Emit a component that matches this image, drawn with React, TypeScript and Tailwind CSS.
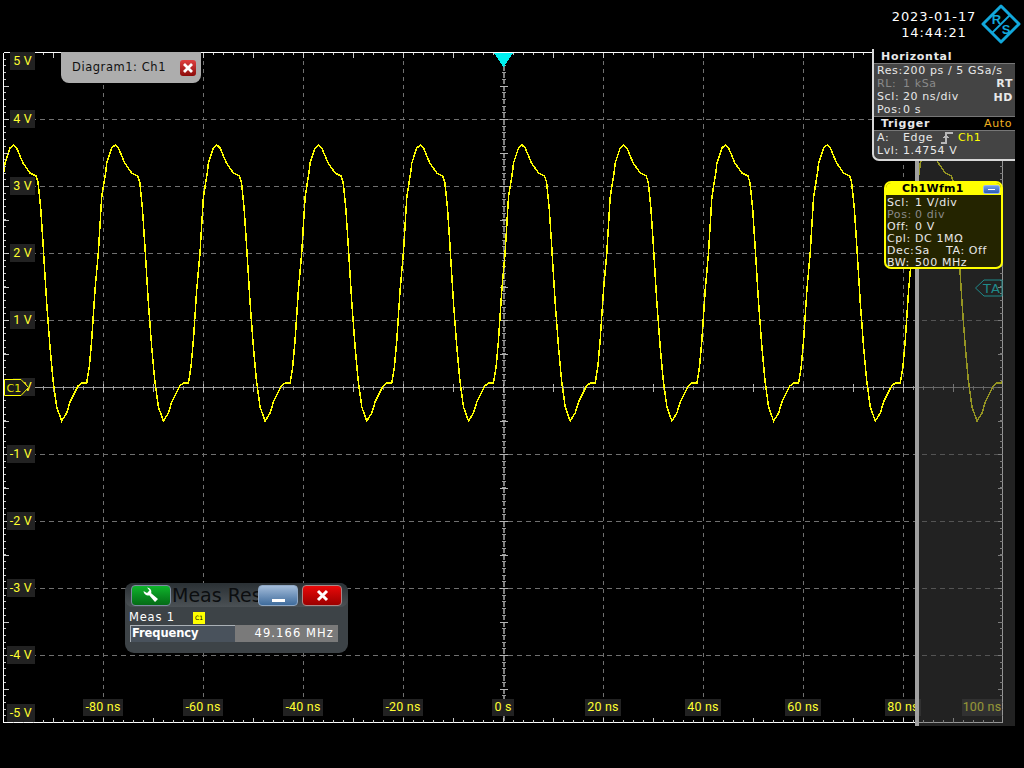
const PERIOD = 101.7;
const SHAPE: [number, number][] = [
  [-9.5, 172], [-8.5, 163], [-3.5, 148], [0, 145], [3.2, 148], [9.5, 163], [16.5, 173], [22.5, 176], [24.5, 182], [27.2, 208],
  [29.5, 243], [33.2, 303], [36.5, 347], [39.5, 380], [43.2, 407], [48.2, 421], [53.2, 413], [56.5, 402], [64.5, 386],
  [68.2, 383], [73.2, 383], [75.8, 367], [78.2, 340], [81.5, 290], [84.8, 253], [88.2, 197], [92.5, 170],
];

function wavePoints(): string {
  const pts: string[] = [];
  for (let k = 0; k < 10; k++) {
    const peak = 13.5 + k * PERIOD;
    for (const [dx, y] of SHAPE) {
      pts.push(`${(peak + dx).toFixed(1)},${y}`);
    }
  }
  return pts.join(" ");
}

const range = (a: number, b: number, s: number) => {
  const r: number[] = [];
  for (let v = a; v <= b + 0.01; v += s) r.push(v);
  return r;
};

const T = 52.5, B = 722.5, L = 3.5, R = 1002.5, CY = 387.5, CX = 503.5;
const vLabels = ["5 V", "4 V", "3 V", "2 V", "1 V", "V", "-1 V", "-2 V", "-3 V", "-4 V", "-5 V"];
const hLabels = ["-80 ns", "-60 ns", "-40 ns", "-20 ns", "0 s", "20 ns", "40 ns", "60 ns", "80 ns"];
const font = "[font-family:'DejaVu_Sans',sans-serif]";
const axisText = "bg-[#222222] text-[12.5px] tracking-[0.2px] text-[#ffff30] [font-family:Roboto,sans-serif]";

function Scope() {
  const xs = range(103.5, 903.5, 100);
  const ys = range(119.5, 655.5, 67);
  const px = (v: number) => Math.round(v - 0.5) + 0.5;
  return (
    <svg width="1024" height="716" viewBox="0 52 1024 716" className="block" shapeRendering="crispEdges">
      <defs>
        <clipPath id="plot"><rect x="4" y="52" width="998" height="671" /></clipPath>
      </defs>
      {xs.map((x) =>
        x !== CX ? <line key={x} x1={x} x2={x} y1={T} y2={B} stroke="#707070" strokeDasharray="4 4" /> : null
      )}
      {ys.map((y) =>
        y !== CY ? <line key={y} x1={L} x2={R} y1={y} y2={y} stroke="#707070" strokeDasharray="5 4" /> : null
      )}
      <line x1={L} x2={R} y1={CY} y2={CY} stroke="#9a9a9a" />
      <line x1={CX} x2={CX} y1={T} y2={B} stroke="#7e7e7e" strokeWidth="2" strokeDasharray="5 1.7" />
      {range(13.5, 993.5, 10).map((x) => (
        <line key={x} x1={x} x2={x} y1={CY - 2} y2={CY + 2} stroke="#9a9a9a" />
      ))}
      {range(53.5, 953.5, 50).map((x) => (
        <line key={x} x1={x} x2={x} y1={CY - 4} y2={CY + 4} stroke="#b4b4b4" />
      ))}
      {range(T + 6.7, B - 6.7, 6.7).map((y) => (
        <line key={y} x1={CX - 2} x2={CX + 2} y1={px(y)} y2={px(y)} stroke="#9a9a9a" />
      ))}
      {range(T + 33.5, B - 33.5, 33.5).map((y) => (
        <line key={y} x1={CX - 4} x2={CX + 4} y1={px(y)} y2={px(y)} stroke="#b4b4b4" />
      ))}
      <g clipPath="url(#plot)">
        <polyline points={wavePoints()} fill="none" stroke="#ffff00" strokeWidth="1.5" />
      </g>
      <line x1={L} x2={R} y1={T} y2={T} stroke="#ffffff" strokeWidth="1.5" />
      <line x1={L} x2={R} y1={B} y2={B} stroke="#ffffff" strokeWidth="1.5" />
      <line x1={L} x2={L} y1={T} y2={B} stroke="#ffffff" strokeWidth="1.5" />
      <line x1={R} x2={R} y1={T} y2={B} stroke="#ffffff" strokeWidth="1.5" />
      {range(13.5, 993.5, 10).map((x) => (
        <g key={x} stroke="#c8c8c8">
          <line x1={x} x2={x} y1={T} y2={T + 2.5} />
          <line x1={x} x2={x} y1={B - 2.5} y2={B} />
        </g>
      ))}
      {range(53.5, 953.5, 50).map((x) => (
        <g key={x} stroke="#c8c8c8">
          <line x1={x} x2={x} y1={T} y2={T + 5} />
          <line x1={x} x2={x} y1={B - 5} y2={B} />
        </g>
      ))}
      {range(T + 6.7, B - 6.7, 6.7).map((y) => (
        <g key={y} stroke="#c8c8c8">
          <line x1={L} x2={L + 2.5} y1={px(y)} y2={px(y)} />
          <line x1={R - 2.5} x2={R} y1={px(y)} y2={px(y)} />
        </g>
      ))}
      {range(T + 33.5, B - 33.5, 33.5).map((y) => (
        <g key={y} stroke="#c8c8c8">
          <line x1={L} x2={L + 5} y1={px(y)} y2={px(y)} />
          <line x1={R - 5} x2={R} y1={px(y)} y2={px(y)} />
        </g>
      ))}
      <polygon points="494,53 513,53 503.5,67" fill="#00f0f0" />
    </svg>
  );
}

function Logo() {
  return (
    <svg width="40" height="40" viewBox="0 0 40 40" className="block shrink-0">
      <polygon points="20,2 38,20 20,38 2,20" fill="none" stroke="#12a8dc" strokeWidth="3" strokeLinejoin="round" />
      <line x1="11" y1="29" x2="29" y2="11" stroke="#12a8dc" strokeWidth="1.8" />
      <text x="15.5" y="20" fontSize="13" fontWeight="bold" fill="#12a8dc" textAnchor="middle" fontFamily="'Liberation Sans',sans-serif">R</text>
      <text x="25" y="30" fontSize="13" fontWeight="bold" fill="#12a8dc" textAnchor="middle" fontFamily="'Liberation Sans',sans-serif">S</text>
    </svg>
  );
}

function Row({ k, v, dim, w = "w-[26px]", h = "h-[13px]" }: { k: string; v?: string; dim?: boolean; w?: string; h?: string }) {
  return (
    <div className={`flex ${h} items-center whitespace-nowrap ${dim ? "text-[#8a8a8a]" : "text-[#e8e8e8]"}`}>
      <span className={w}>{k}</span>
      <span>{v}</span>
    </div>
  );
}

function Horizontal() {
  return (
    <div className="absolute left-[872px] top-[49px] h-[112px] w-[143px] overflow-hidden rounded-bl-[7px] border-b-2 border-l-2 border-[#d8d8d8] bg-[#444444] text-[11px] leading-[13px] tracking-[0.6px]">
      <div className="flex h-[14px] items-end bg-black pl-[7px] font-bold tracking-[0.7px] text-[#e8e8e8]">Horizontal</div>
      <div className="flex h-[53px] justify-between border-t border-[#777] pl-[3px] pr-[2px]">
        <div>
          <Row k="Res:" v="200 ps / 5 GSa/s" />
          <Row k="RL:" v="1 kSa" dim />
          <Row k="Scl:" v="20 ns/div" />
          <Row k="Pos:" v="0 s" />
        </div>
      </div>
      <div className="absolute right-[2px] top-[28px] text-right font-bold leading-[14px] text-[#e8e8e8]">RT<br />HD</div>
      <div className="flex h-[14px] items-end justify-between border-t border-[#777] bg-black pl-[7px] pr-[3px]">
        <span className="font-bold tracking-[0.7px] text-[#e8e8e8]">Trigger</span>
        <span className="text-[#f0b020]">Auto</span>
      </div>
      <div className="border-t border-[#777] pl-[3px]">
        <div className="flex h-[13px] items-center whitespace-nowrap text-[#e8e8e8]">
          <span className="w-[26px]">A:</span>
          <span className="w-[38px]">Edge</span>
          <svg width="12" height="13" viewBox="0 0 12 13" className="mr-[5px]" shapeRendering="crispEdges">
            <path d="M0 11.5H5V2H12" fill="none" stroke="#b8b8b8" strokeWidth="2" />
            <path d="M5 3L1.5 7H8.5Z" fill="#b8b8b8" />
          </svg>
          <span className="text-[#ffff00]">Ch1</span>
        </div>
        <Row k="Lvl:" v="1.4754 V" />
      </div>
    </div>
  );
}

function Wfm() {
  return (
    <div className="absolute left-[884px] top-[181px] h-[88px] w-[119px] overflow-hidden rounded-[7px] border-2 border-[#ffff00] bg-[#242400] text-[11px] leading-[12px] tracking-[0.6px]">
      <div className="flex h-[12px] items-center justify-between bg-[#ffff00] pl-[16px] pr-[1px] font-bold tracking-[0.3px] text-black">
        Ch1Wfm1
        <div className="flex h-[9px] w-[17px] items-center justify-center rounded-[2px] border border-[#9db6e6] bg-gradient-to-b from-[#6f9ae8] to-[#2a5cb8]">
          <div className="h-px w-[7px] bg-white" />
        </div>
      </div>
      <div className="pl-px pt-[2px]">
        <Row h="h-[12px]" k="Scl:" v="1 V/div" w="w-[28px]" />
        <Row h="h-[12px]" k="Pos:" v="0 div" dim w="w-[28px]" />
        <Row h="h-[12px]" k="Off:" v="0 V" w="w-[28px]" />
        <Row h="h-[12px]" k="Cpl:" v="DC 1MΩ" w="w-[28px]" />
        <div className="flex h-[12px] items-center whitespace-nowrap text-[#e8e8e8]">
          <span className="w-[28px]">Dec:</span>
          <span className="w-[31px]">Sa</span>
          <span>TA: Off</span>
        </div>
        <Row h="h-[12px]" k="BW:" v="500 MHz" w="w-[28px]" />
      </div>
    </div>
  );
}

function Meas() {
  return (
    <div className="absolute left-[125px] top-[583px] flex h-[70px] w-[223px] flex-col rounded-[9px] bg-[#3d4347]">
      <div className="flex h-[24px] items-center rounded-[8px] bg-gradient-to-b from-[#2a3034] to-[#4b5155] pl-[6px]">
        <div className="flex h-[21px] w-[40px] items-center justify-center rounded-[4px] border border-[#7d8ba0] bg-gradient-to-b from-[#0fb52c] to-[#056b16]">
          <svg width="18" height="18" viewBox="0 0 18 18">
            <path d="M1.5 5A4.5 4.5 0 0 0 7.2 9.2L13 16L16 13L9.2 7.2A4.5 4.5 0 0 0 5 1.5L7.5 4.5L5 7Z" fill="#ffffff" />
          </svg>
        </div>
        <span className="w-[87px] whitespace-nowrap pl-px text-[19px] leading-[24px] text-[#0c0e10]">Meas Res</span>
        <div className="flex h-[21px] w-[40px] items-end justify-center rounded-[4px] border border-[#8fa7c4] bg-gradient-to-b from-[#a3bcd9] to-[#3f6c9c] pb-[3px]">
          <div className="h-[3px] w-[13px] bg-white" />
        </div>
        <div className="ml-[4px] flex h-[21px] w-[40px] items-center justify-center rounded-[4px] border border-[#a88] bg-gradient-to-b from-[#ea0a0a] to-[#9c0000]">
          <svg width="13" height="13" viewBox="0 0 13 13">
            <path d="M2 2L11 11M11 2L2 11" stroke="#ffffff" strokeWidth="3" />
          </svg>
        </div>
      </div>
      <div className="flex h-[18px] items-center pl-[4px] pt-[3px] text-[11.5px] tracking-[0.8px] text-white">
        <span className="w-[64px]">Meas 1</span>
        <span className="flex h-[12px] w-[12px] items-center justify-center bg-[#ffff00] text-[6px] font-normal tracking-normal text-black">C1</span>
      </div>
      <div className="ml-[5px] flex h-[17px] w-[208px] text-[11.5px] tracking-[1.1px] text-white">
        <div className="flex w-[105px] items-center border-l border-t border-[#aab0b6] bg-[#49525c] pl-px font-bold tracking-[-0.1px]">Frequency</div>
        <div className="flex flex-1 items-center justify-end bg-[#7a7a7a] pr-[4px]">49.166 MHz</div>
      </div>
    </div>
  );
}

export default function App() {
  return (
    <div className={`relative h-[768px] w-[1024px] overflow-hidden bg-black ${font}`}>
      <header className="flex h-[52px] items-start justify-end pr-[3px] pt-[4px]">
        <div className="w-[92px] pr-[2px] pt-[5px] text-center text-[13px] leading-[16px] tracking-[0.9px] text-white">
          2023-01-17<br />14:44:21
        </div>
        <Logo />
      </header>
      <Scope />

      <div className="absolute left-[13px] top-[52px] flex w-[22px] flex-col items-end">
        {vLabels.map((t, i) => (
          <div
            key={t}
            className={`flex w-full ${i === 0 ? "h-[33.5px] items-start" : i === 10 ? "h-[33.5px] items-end" : "h-[67px] items-center"} justify-end`}
          >
            <span className={`flex h-[18px] items-center justify-end whitespace-nowrap px-[3px] ${t === "V" ? "w-full" : ""} ${axisText}`}>{t}</span>
          </div>
        ))}
      </div>

      <div className="absolute left-[53px] top-[699px] flex h-[17px]">
        {hLabels.map((t) => (
          <div key={t} className="flex w-[100px] justify-center">
            <span className={`flex items-center whitespace-nowrap px-[2px] ${axisText}`}>{t}</span>
          </div>
        ))}
        <span className={`ml-[9px] flex w-[40px] items-center justify-center whitespace-nowrap ${axisText}`}>100 ns</span>
      </div>

      <svg width="26" height="17" viewBox="0 0 26 17" className="absolute left-[4px] top-[379px]">
        <polygon points="0.5,0.5 17,0.5 24.5,8.5 17,16.5 0.5,16.5" fill="#1a1a1a" stroke="#ffff00" />
        <text x="2.5" y="12.5" fontSize="11" fill="#e8e800" fontFamily="'DejaVu Sans',sans-serif">C1</text>
      </svg>

      <div className="absolute left-[915px] top-[52px] h-[674px] w-[100px] bg-[#3e3e3e]/[0.55]" />
      <div className="absolute left-[915px] top-[52px] h-[674px] w-[4px] bg-[#a0a0a0]" />

      <svg width="29" height="18" viewBox="0 0 29 18" className="absolute left-[974px] top-[279px]">
        <path d="M28 1H10L1.5 9L10 17H28Z" fill="none" stroke="#1f8a8a" strokeWidth="1" />
        <text x="9" y="14" fontSize="13" fill="#1f8a8a" letterSpacing="1" fontFamily="'DejaVu Sans',sans-serif">TA</text>
      </svg>

      <div className="absolute left-[61px] top-[52px] flex h-[31px] w-[140px] items-center justify-between rounded-b-[8px] bg-[#adadad] pl-[11px] pr-[5px] text-[11.5px] tracking-[0.55px] text-[#111]">
        <span>Diagram1: Ch1</span>
        <div className="flex h-[16px] w-[16px] items-center justify-center rounded-[3px] bg-gradient-to-b from-[#e04040] to-[#8c0808]">
          <svg width="12" height="12" viewBox="0 0 12 12">
            <path d="M2 2L10 10M10 2L2 10" stroke="#ffffff" strokeWidth="2.8" />
          </svg>
        </div>
      </div>

      <Horizontal />
      <Wfm />
      <Meas />
    </div>
  );
}
